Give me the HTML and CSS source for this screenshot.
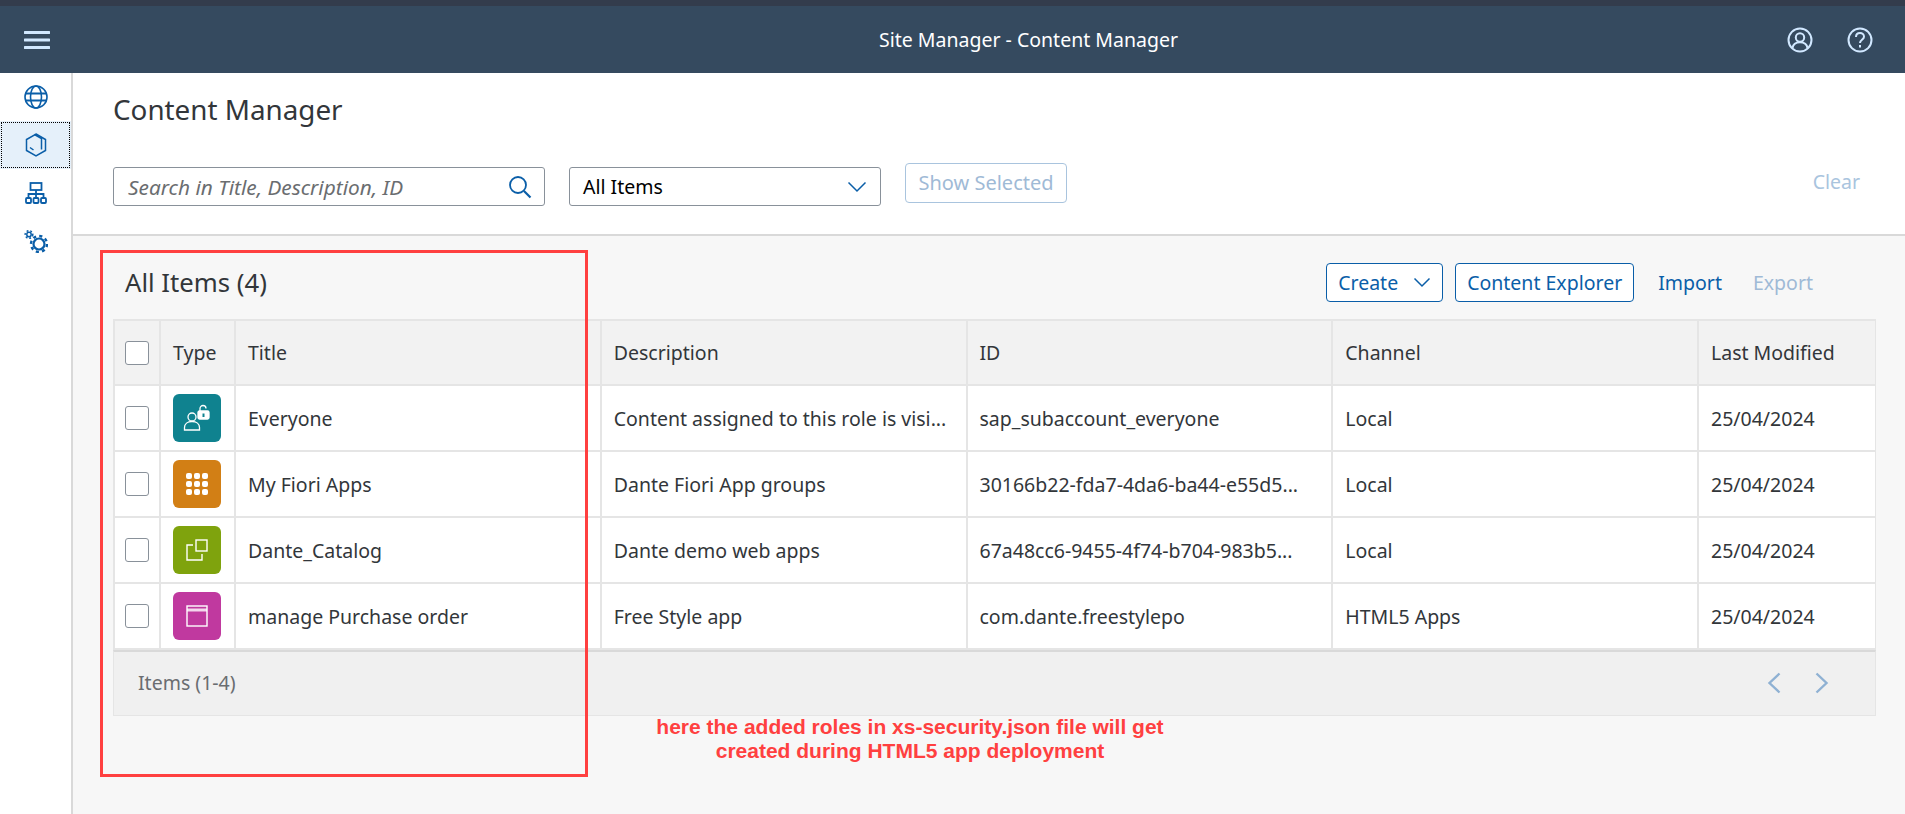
FILE: index.html
```html
<!DOCTYPE html>
<html lang="en">
<head>
    <meta charset="UTF-8">
    <title>Site Manager - Content Manager</title>
    <link rel="stylesheet" href="styles.css">
</head>
<body>
    <div class="topstrip"></div>
    <header class="shell">
        <button class="shell-btn menu-btn">
            <svg width="26" height="20" viewBox="0 0 26 20"><path d="M1 2.5h24M1 10h24M1 17.5h24" stroke="#d1e8ff" stroke-width="3" stroke-linecap="round"/></svg>
        </button>
        <div class="shell-title">Site Manager - Content Manager</div>
        <div class="shell-actions">
            <svg width="26" height="26" viewBox="0 0 26 26" fill="none" stroke="#d1e8ff" stroke-width="2"><circle cx="13" cy="13" r="11.5"/><circle cx="13" cy="10.5" r="4.2"/><path d="M5.5 21c.6-4 3.6-5.8 7.5-5.8s6.9 1.8 7.5 5.8"/></svg>
            <svg width="26" height="26" viewBox="0 0 26 26" fill="none" stroke="#d1e8ff" stroke-width="2"><circle cx="13" cy="13" r="11.5"/><path d="M9 10c0-2.5 1.8-4 4-4s4 1.500 4 3.700c0 3-4 3.300-4 6.300"/><path d="M13 18v2.500"/></svg>
        </div>
    </header>

    <div class="layout">
        <nav class="sidebar">
            <div class="side-item">
                <svg width="24" height="24" viewBox="0 0 24 24" fill="none" stroke="#0a5ea8" stroke-width="1.6"><circle cx="12" cy="12" r="11"/><ellipse cx="12" cy="12" rx="5.5" ry="11"/><path d="M1.800 8.500h20.400M1.800 15.500h20.400" stroke-width="2"/></svg>
            </div>
            <div class="side-item selected">
                <svg width="22" height="24" viewBox="0 0 22 24" fill="none" stroke="#0a5ea8" stroke-width="1.5"><path d="M11 1l9.500 5.500v11L11 23l-9.500-5.500v-11z"/><path d="M9.500 1.500l7 4v11M5 14.500l3.500 2.500"/></svg>
            </div>
            <div class="side-item">
                <svg width="22" height="22" viewBox="0 0 22 22" fill="none" stroke="#0a5ea8" stroke-width="1.8"><rect x="5.5" y="1" width="11" height="7"/><path d="M11 8v8M3.500 16v-4h15v4"/><rect x="1" y="16" width="5" height="5" rx="1"/><rect x="8.5" y="16" width="5" height="5" rx="1"/><rect x="16" y="16" width="5" height="5" rx="1"/></svg>
            </div>
            <div class="side-item">
                <svg width="24" height="23" viewBox="0 0 24 23" fill="none" stroke="#0a5ea8"><circle cx="15" cy="14" r="5.5" stroke-width="2.2"/><circle cx="15" cy="14" r="8" stroke-width="2.4" stroke-dasharray="3.14 3.14"/><circle cx="5" cy="4.5" r="2.2" stroke-width="1.5"/><circle cx="5" cy="4.5" r="3.8" stroke-width="1.5" stroke-dasharray="1.87 1.87"/></svg>
            </div>
        </nav>

        <main class="content">
            <section class="page-head">
                <h1>Content Manager</h1>
                <div class="filters">
                    <div class="search">
                        <span>Search in Title, Description, ID</span>
                        <svg width="24" height="24" viewBox="0 0 24 24" fill="none" stroke="#0a5ea8" stroke-width="1.8"><circle cx="10" cy="10" r="8"/><path d="M16 16l6.500 6.500" stroke-width="2.2"/></svg>
                    </div>
                    <div class="select">
                        <span>All Items</span>
                        <svg width="20" height="12" viewBox="0 0 20 12" fill="none" stroke="#0a5ea8" stroke-width="1.5"><path d="M1.500 1.500l8.500 8.500 8.500-8.500"/></svg>
                    </div>
                    <div class="show-selected">Show Selected</div>
                    <div class="clear">Clear</div>
                </div>
            </section>

            <section class="list">
                <div class="list-bar">
                    <h2>All Items (4)</h2>
                    <div class="list-actions">
                        <div class="btn">Create
                            <svg width="18" height="11" viewBox="0 0 18 11" fill="none" stroke="#0a5ea8" stroke-width="1.5"><path d="M1.500 1.500l7.500 7.500 7.500-7.500"/></svg>
                        </div>
                        <div class="btn">Content Explorer</div>
                        <div class="link">Import</div>
                        <div class="link off">Export</div>
                    </div>
                </div>

                <table class="items">
                    <colgroup>
                        <col class="c-check"><col class="c-type"><col class="c-wide"><col class="c-wide"><col class="c-wide"><col class="c-wide"><col>
                    </colgroup>
                    <thead>
                        <tr>
                            <th><span class="check"></span></th>
                            <th>Type</th>
                            <th>Title</th>
                            <th>Description</th>
                            <th>ID</th>
                            <th>Channel</th>
                            <th>Last Modified</th>
                        </tr>
                    </thead>
                    <tbody>
                        <tr>
                            <td><span class="check"></span></td>
                            <td><span class="type-icon teal">
                                <svg width="28" height="28" viewBox="0 0 28 28" fill="none" stroke="#fff" stroke-width="1.3"><circle cx="9" cy="13" r="4"/><path d="M1.500 26v-2.500c0-3.500 3-6 7.500-6s7.500 2.500 7.500 6V26z"/><path d="M17 7V4.500a3 3 0 0 1 6 0"/><rect x="15" y="7" width="11" height="8" rx="1.5" fill="#fff"/><path d="M20.500 9.500v3.500" stroke="#0f828f" stroke-width="2"/></svg>
                            </span></td>
                            <td>Everyone</td>
                            <td>Content assigned to this role is visi...</td>
                            <td>sap_subaccount_everyone</td>
                            <td>Local</td>
                            <td>25/04/2024</td>
                        </tr>
                        <tr>
                            <td><span class="check"></span></td>
                            <td><span class="type-icon orange">
                                <svg width="22" height="22" viewBox="0 0 22 22" fill="#fff"><rect x="0" y="0" width="6" height="6" rx="2"/><rect x="8" y="0" width="6" height="6" rx="2"/><rect x="16" y="0" width="6" height="6" rx="2"/><rect x="0" y="8" width="6" height="6" rx="2"/><rect x="8" y="8" width="6" height="6" rx="2"/><rect x="16" y="8" width="6" height="6" rx="2"/><rect x="0" y="16" width="6" height="6" rx="2"/><rect x="8" y="16" width="6" height="6" rx="2"/><rect x="16" y="16" width="6" height="6" rx="2"/></svg>
                            </span></td>
                            <td>My Fiori Apps</td>
                            <td>Dante Fiori App groups</td>
                            <td>30166b22-fda7-4da6-ba44-e55d5...</td>
                            <td>Local</td>
                            <td>25/04/2024</td>
                        </tr>
                        <tr>
                            <td><span class="check"></span></td>
                            <td><span class="type-icon green">
                                <svg width="22" height="22" viewBox="0 0 22 22" fill="none" stroke="#fff" stroke-width="1.4"><path d="M7 6H1v15h15v-6"/><rect x="10" y="1" width="11" height="11"/></svg>
                            </span></td>
                            <td>Dante_Catalog</td>
                            <td>Dante demo web apps</td>
                            <td>67a48cc6-9455-4f74-b704-983b5...</td>
                            <td>Local</td>
                            <td>25/04/2024</td>
                        </tr>
                        <tr>
                            <td><span class="check"></span></td>
                            <td><span class="type-icon pink">
                                <svg width="22" height="22" viewBox="0 0 22 22" fill="none" stroke="#fff" stroke-width="1.4"><rect x="1" y="1" width="20" height="20"/><path d="M1 5h20" stroke-width="3" stroke-opacity=".8"/></svg>
                            </span></td>
                            <td>manage Purchase order</td>
                            <td>Free Style app</td>
                            <td>com.dante.freestylepo</td>
                            <td>HTML5 Apps</td>
                            <td>25/04/2024</td>
                        </tr>
                    </tbody>
                </table>
                <div class="list-foot">
                    <span>Items (1-4)</span>
                    <div class="pager">
                        <svg width="14" height="22" viewBox="0 0 14 22" fill="none" stroke="#8fb1d3" stroke-width="2.4"><path d="M12.500 1.500L2.500 11l10 9.500"/></svg>
                        <svg width="14" height="22" viewBox="0 0 14 22" fill="none" stroke="#8fb1d3" stroke-width="2.4"><path d="M1.500 1.500l10 9.500-10 9.500"/></svg>
                    </div>
                </div>
            </section>
        </main>
    </div>

    <!-- annotation drawn on top of the screenshot -->
    <div class="mark-box"></div>
    <div class="mark-note">here the added roles in xs-security.json file will get<br>created during HTML5 app deployment</div>
</body>
</html>
```

FILE: styles.css
```css
* {
    box-sizing: border-box;
}
html, body {
    height: 100%;
}
body {
    margin: 0;
    font-family: "Noto Sans", Arial, sans-serif;
    font-size: 19.5px;
    color: #32363a;
    background-color: #f7f7f7;
    display: flex;
    flex-direction: column;
    overflow: hidden;
}
.topstrip {
    height: 6px;
    background-color: #333c4c;
}
.shell {
    height: 67px;
    flex-shrink: 0;
    background-color: #354a5f;
    display: flex;
    align-items: center;
    padding: 0 32px 0 24px;
    color: #fff;
}
.shell-btn {
    background: none;
    border: none;
    padding: 0;
    display: flex;
}
.shell-title {
    flex: 1;
    text-align: center;
    font-size: 19.5px;
    padding-left: 220px;
}
.shell-actions {
    display: flex;
    gap: 34px;
}
.layout {
    flex: 1;
    display: flex;
}
.sidebar {
    width: 73px;
    flex-shrink: 0;
    background-color: #fff;
    border-right: 2px solid #d9d9d9;
}
.side-item {
    height: 48px;
    display: flex;
    align-items: center;
    justify-content: center;
}
.side-item.selected {
    background-color: #e5f0fa;
    outline: 1px dotted #000;
    outline-offset: -2px;
}
.content {
    flex: 1;
    min-width: 0;
}
.page-head {
    height: 163px;
    background-color: #fff;
    border-bottom: 2px solid #d9d9d9;
    padding: 0 45px 0 40px;
}
h1 {
    margin: 0;
    padding-top: 17px;
    height: 94px;
    font-size: 27.8px;
    font-weight: 400;
}
.filters {
    display: flex;
    align-items: flex-start;
}
.search, .select {
    height: 39px;
    border: 1px solid #89919a;
    border-radius: 3px;
    background-color: #fff;
    display: flex;
    align-items: center;
    justify-content: space-between;
}
.search {
    width: 432px;
    padding: 0 12px 0 14px;
    color: #6a6d70;
    font-style: italic;
    font-size: 20.8px;
}
.select {
    width: 312px;
    margin-left: 24px;
    padding: 0 13px;
    color: #000;
}
.show-selected {
    margin: -4px 0 0 24px;
    width: 162px;
    height: 40px;
    padding-bottom: 2px;
    border: 1px solid #a9c4de;
    border-radius: 4px;
    color: #9fbad6;
    font-size: 20px;
    display: flex;
    align-items: center;
    justify-content: center;
}
.clear {
    margin: -2px 0 0 auto;
    color: #a9c4de;
    height: 32px;
    display: flex;
    align-items: center;
}
.list {
    padding: 0 29px 0 40px;
}
.list-bar {
    height: 83px;
    display: flex;
    align-items: center;
    justify-content: space-between;
    padding: 10px 0 0 12px;
}
h2 {
    margin: 0;
    font-size: 25.7px;
    font-weight: 400;
}
.list-actions {
    display: flex;
    align-items: center;
    gap: 12px;
    padding-right: 63px;
}
.btn {
    height: 39px;
    padding: 0 11px;
    border: 1px solid #0a5ea8;
    border-radius: 4px;
    background-color: #fff;
    color: #0a5ea8;
    display: flex;
    align-items: center;
    gap: 15px;
}
.link {
    color: #0a5ea8;
    margin-left: 12px;
}
.link.off {
    color: #9fbad6;
    margin-left: 19px;
}
.items {
    width: 100%;
    table-layout: fixed;
    border-collapse: collapse;
    background-color: #fff;
}
.c-check {
    width: 46px;
}
.c-type {
    width: 75px;
}
.c-wide {
    width: 365.75px;
}
.items th, .items td {
    height: 66px;
    border: 2px solid #e5e5e5;
    padding: 0 12px;
    font-weight: 400;
    text-align: left;
    white-space: nowrap;
}
.items th {
    height: 65px;
    background-color: #f2f2f2;
}
.items td:first-child, .items th:first-child {
    padding-left: 10px;
}
.items td:last-child, .items th:last-child {
    border-right-width: 1px;
}
.check {
    display: block;
    width: 24px;
    height: 24px;
    border: 1px solid #89919a;
    border-radius: 3px;
    background-color: #fff;
}
.type-icon {
    width: 48px;
    height: 48px;
    border-radius: 6px;
    display: flex;
    align-items: center;
    justify-content: center;
}
.teal {
    background-color: #0f828f;
}
.orange {
    background-color: #d27f15;
}
.green {
    background-color: #7fa30d;
}
.pink {
    background-color: #c0399f;
}
.list-foot {
    height: 66px;
    background-color: #f0f0f0;
    border: 1px solid #e5e5e5;
    border-top: 2px solid #d9d9d9;
    display: flex;
    align-items: center;
    justify-content: space-between;
    padding: 0 46px 2px 24px;
    color: #6a6d70;
}
.pager {
    display: flex;
    gap: 34px;
}
.mark-box {
    position: absolute;
    left: 100px;
    top: 250px;
    width: 488px;
    height: 527px;
    border: 3px solid #ff4040;
}
.mark-note {
    position: absolute;
    left: 610px;
    top: 715px;
    width: 600px;
    text-align: center;
    font-family: "Liberation Sans", Arial, sans-serif;
    font-size: 21px;
    line-height: 24px;
    font-weight: 700;
    color: #ff4040;
}
```
